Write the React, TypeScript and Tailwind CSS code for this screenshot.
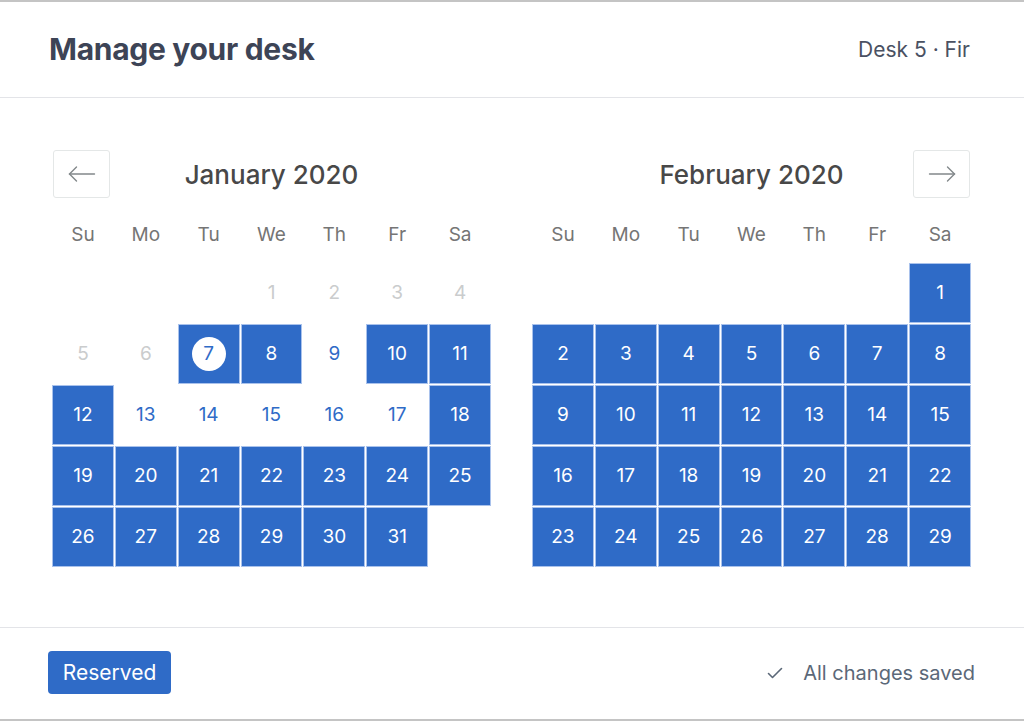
import React from "react";

type Day = { n: number; kind: "past" | "open" | "reserved" | "today" } | null;

const WEEKDAYS = ["Su", "Mo", "Tu", "We", "Th", "Fr", "Sa"];

function january(): Day[] {
  const reserved = new Set([7, 8, 10, 11, 12, 18, 19, 20, 21, 22, 23, 24, 25, 26, 27, 28, 29, 30, 31]);
  const days: Day[] = [null, null, null];
  for (let n = 1; n <= 31; n++) {
    if (n === 7) days.push({ n, kind: "today" });
    else if (n < 7) days.push({ n, kind: "past" });
    else days.push({ n, kind: reserved.has(n) ? "reserved" : "open" });
  }
  return days;
}

function february(): Day[] {
  const days: Day[] = [null, null, null, null, null, null];
  for (let n = 1; n <= 29; n++) days.push({ n, kind: "reserved" });
  return days;
}

function Arrow({ dir }: { dir: "left" | "right" }) {
  return (
    <svg width="28" height="16" viewBox="0 0 28 16" fill="none" stroke="#82888a" strokeWidth="1.4" strokeLinecap="round">
      {dir === "left" ? (
        <>
          <path d="M1.5 8h25" />
          <path d="M8.5 1L1.5 8l7 7" />
        </>
      ) : (
        <>
          <path d="M1.5 8h25" />
          <path d="M19.5 1l7 7-7 7" />
        </>
      )}
    </svg>
  );
}

function NavButton({ dir }: { dir: "left" | "right" }) {
  return (
    <button
      type="button"
      className="flex h-[48px] w-[57px] items-center justify-center rounded-[3px] border border-[#e4e7e7] bg-white"
    >
      <Arrow dir={dir} />
    </button>
  );
}

function DayCell({ day }: { day: Day }) {
  if (!day) return <div className="h-[58px]" />;
  if (day.kind === "past")
    return <div className="flex h-[58px] items-center justify-center text-[19px] text-[#cacccd]">{day.n}</div>;
  if (day.kind === "open")
    return <div className="flex h-[58px] items-center justify-center text-[19px] text-[#2f6bc7]">{day.n}</div>;
  return (
    <div className="-m-[1px] flex h-[60px] items-center justify-center border border-[#a9c2ec] bg-[#2f6bc7] text-[19px] text-white">
      {day.kind === "today" ? (
        <span className="flex h-[34px] w-[34px] items-center justify-center rounded-full bg-white text-[#2f6bc7]">{day.n}</span>
      ) : (
        day.n
      )}
    </div>
  );
}

function Month({ title, days, nav }: { title: string; days: Day[]; nav: "left" | "right" }) {
  return (
    <div className="w-[437px]">
      <div className="flex h-[48px] items-center justify-between">
        {nav === "left" ? <NavButton dir="left" /> : <div className="w-[57px]" />}
        <h3 className="text-[26px] font-medium text-[#484848]">{title}</h3>
        {nav === "right" ? <NavButton dir="right" /> : <div className="w-[57px]" />}
      </div>
      <div className="grid h-[66px] grid-cols-7 items-center gap-x-[3px] pt-2">
        {WEEKDAYS.map((d) => (
          <div key={d} className="text-center text-[19px] text-[#757575]">
            {d}
          </div>
        ))}
      </div>
      <div className="grid grid-cols-7 gap-[3px]">
        {days.map((d, i) => (
          <DayCell key={i} day={d} />
        ))}
      </div>
    </div>
  );
}

export default function App() {
  return (
    <div
      className="h-[721px] w-[1024px] overflow-hidden border-t-2 border-b-2 border-[#c4c4c4] bg-white"
      style={{ fontFamily: "Inter, 'Noto Sans', sans-serif" }}
    >
      <header className="flex h-[96px] items-center justify-between border-b border-[#e3e4e8] pl-[49px] pr-[54px]">
        <h1 className="text-[30px] font-bold tracking-[-0.3px] text-[#3d4456]">Manage your desk</h1>
        <span className="text-[21px] text-[#4a5162]">Desk 5 · Fir</span>
      </header>
      <main className="flex h-[529px] justify-between pl-[53px] pr-[54px] pt-[52px]">
        <Month title="January 2020" days={january()} nav="left" />
        <Month title="February 2020" days={february()} nav="right" />
      </main>
      <footer className="flex h-[90px] items-center justify-between border-t border-[#e3e4e8] pl-[48px] pr-[49px]">
        <button
          type="button"
          className="flex h-[43px] w-[123px] items-center justify-center rounded-[4px] bg-[#2f6bc7] text-[21px] text-white"
        >
          Reserved
        </button>
        <div className="flex items-center gap-[20px] text-[20px] text-[#5b6878]">
          <svg width="16" height="12" viewBox="0 0 16 12" fill="none" stroke="#5b6878" strokeWidth="1.6" strokeLinecap="round" strokeLinejoin="round">
            <path d="M1.5 6.5l4 4L14.5 1.5" />
          </svg>
          <span>All changes saved</span>
        </div>
      </footer>
    </div>
  );
}
